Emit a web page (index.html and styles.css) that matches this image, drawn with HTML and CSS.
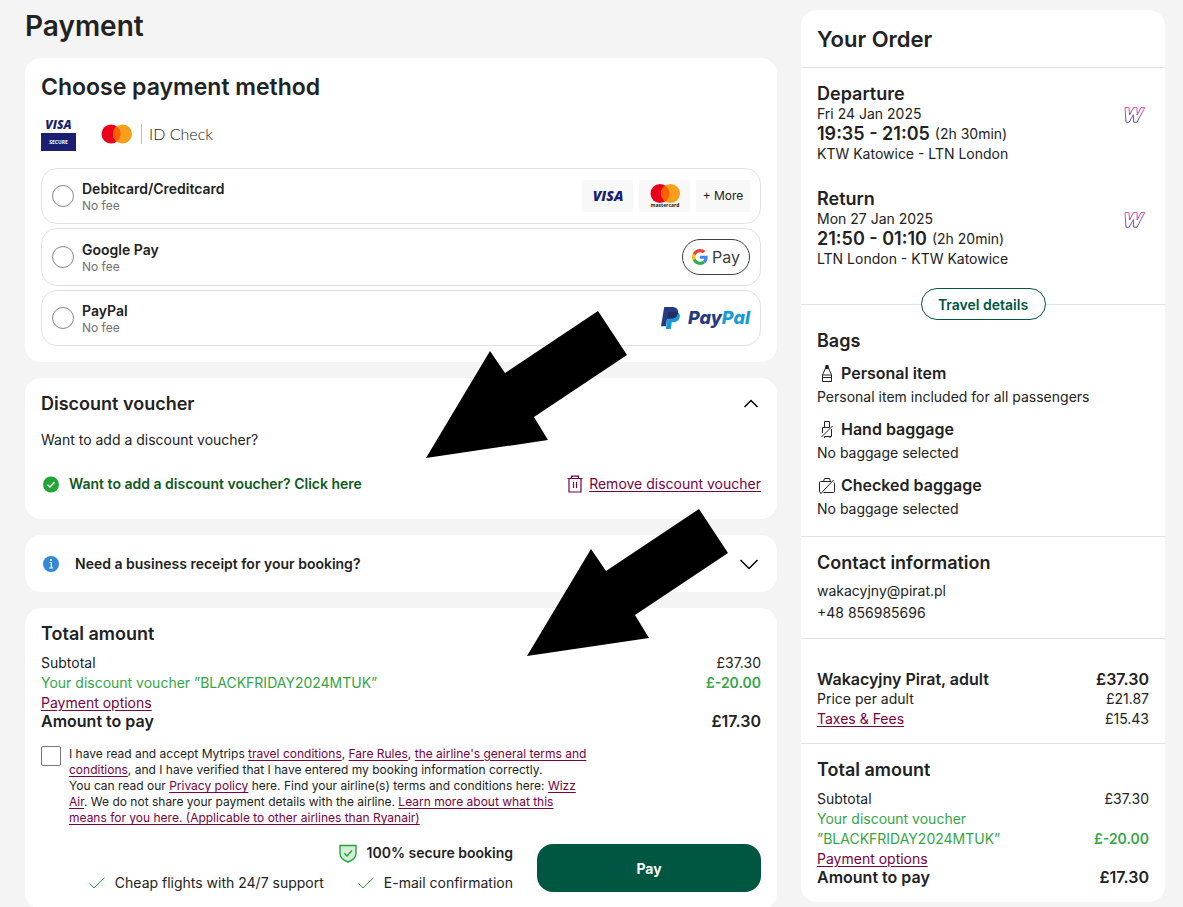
FILE: index.html
```html
<!DOCTYPE html>
<html lang="en">

<head>
    <meta charset="UTF-8">
    <meta name="viewport" content="width=device-width, initial-scale=1.0">
    <title>Payment</title>
    <link rel="stylesheet" href="styles.css">
</head>

<body>
    <div class="page">
        <!-- Left column -->
        <main class="checkout">
            <h1>Payment</h1>

            <!-- Payment methods -->
            <section class="card methods">
                <h2>Choose payment method</h2>
                <div class="secure-logos">
                    <svg class="visa-secure" width="35" height="32" viewBox="0 0 35 32" role="img" aria-label="Visa Secure">
                        <text class="visa-text" x="17.5" y="10" font-size="12" text-anchor="middle">VISA</text>
                        <rect y="14" width="35" height="18" fill="#1a1f71" />
                        <text class="secure-text" x="17.5" y="25" text-anchor="middle">SECURE</text>
                    </svg>
                    <div class="id-check">
                        <svg width="32" height="20" viewBox="0 0 32 20" aria-hidden="true">
                            <circle cx="10" cy="10" r="9.5" fill="#eb001b" />
                            <circle cx="21.5" cy="10" r="9.5" fill="#f79e1b" />
                            <path d="M15.75 2.4a9.5 9.5 0 0 1 0 15.2a9.5 9.5 0 0 1 0-15.2z" fill="#ff5f00" />
                        </svg>
                        <span class="id-check-text">ID Check</span>
                    </div>
                </div>

                <div class="options">
                    <div class="option">
                        <input type="radio" name="method" id="method-card">
                        <label for="method-card"><strong>Debitcard/Creditcard</strong><small>No fee</small></label>
                        <div class="badges">
                            <span class="badge">
                                <svg width="40" height="24" viewBox="0 0 40 24" role="img" aria-label="Visa">
                                    <text class="visa-text" x="20" y="17" font-size="14" text-anchor="middle">VISA</text>
                                </svg>
                            </span>
                            <span class="badge">
                                <svg width="32" height="26" viewBox="0 0 32 26" role="img" aria-label="Mastercard">
                                    <circle cx="11" cy="10.5" r="9.5" fill="#eb001b" />
                                    <circle cx="21.5" cy="10.5" r="9.5" fill="#f79e1b" />
                                    <path d="M16.25 2.6a9.5 9.5 0 0 1 0 15.8a9.5 9.5 0 0 1 0-15.8z" fill="#ff5f00" />
                                    <text class="mastercard-text" x="16" y="24" text-anchor="middle">mastercard</text>
                                </svg>
                            </span>
                            <span class="badge badge-more">+ More</span>
                        </div>
                    </div>

                    <div class="option">
                        <input type="radio" name="method" id="method-google">
                        <label for="method-google"><strong>Google Pay</strong><small>No fee</small></label>
                        <span class="gpay">
                            <svg width="16" height="16" viewBox="0 0 48 48" aria-hidden="true">
                                <path fill="#ea4335" d="M24 9.5c3.54 0 6.71 1.22 9.21 3.6l6.85-6.85C35.9 2.38 30.47 0 24 0 14.62 0 6.51 5.38 2.56 13.22l7.98 6.19C12.43 13.72 17.74 9.5 24 9.5z" />
                                <path fill="#4285f4" d="M46.98 24.55c0-1.57-.15-3.09-.38-4.55H24v9.02h12.94c-.58 2.96-2.26 5.48-4.78 7.18l7.73 6c4.51-4.18 7.09-10.36 7.09-17.65z" />
                                <path fill="#fbbc05" d="M10.53 28.59c-.48-1.45-.76-2.99-.76-4.59s.27-3.14.76-4.59l-7.98-6.19C.92 16.46 0 20.12 0 24c0 3.88.92 7.54 2.56 10.78l7.97-6.19z" />
                                <path fill="#34a853" d="M24 48c6.48 0 11.93-2.13 15.89-5.81l-7.73-6c-2.15 1.45-4.92 2.3-8.16 2.3-6.26 0-11.57-4.22-13.47-9.91l-7.98 6.19C6.51 42.62 14.62 48 24 48z" />
                            </svg>
                            Pay
                        </span>
                    </div>

                    <div class="option">
                        <input type="radio" name="method" id="method-paypal">
                        <label for="method-paypal"><strong>PayPal</strong><small>No fee</small></label>
                        <span class="paypal">
                            <svg width="19" height="22" viewBox="0 0 19 22" aria-hidden="true">
                                <path fill="#179bd7" d="M17.3 5.4C19 7 19.2 9 18.4 11.2C17.5 14 15.2 15.3 12 15.3H10.8L9.7 22H4.8L6.6 10z" />
                                <path fill="#253b80" d="M3.2 0H10.8C15 0 17.7 2 16.9 6C16.2 10 13.5 11.6 9.8 11.6H7.2C6.4 11.6 6 12 5.9 12.8L4.9 19.2H0z" />
                                <path fill="#222d65" d="M8.2 5H15.3Q16.4 5.1 16.9 5.4C16.3 9.8 13.6 11.6 9.8 11.6H7.2Q6.5 11.6 6 12.4L7 6Q7.2 5 8.2 5z" />
                            </svg>
                            <span class="paypal-text">Pay<span>Pal</span></span>
                        </span>
                    </div>
                </div>
            </section>

            <!-- Voucher -->
            <section class="card voucher">
                <div class="card-head">
                    <h3>Discount voucher</h3>
                    <button class="toggle" type="button" aria-label="Hide discount voucher">
                        <svg width="20" height="20" viewBox="0 0 20 20"><path d="M3.5 13L10 6.5L16.5 13" /></svg>
                    </button>
                </div>
                <p>Want to add a discount voucher?</p>
                <div class="voucher-row">
                    <p class="voucher-added">
                        <svg width="20" height="20" viewBox="0 0 20 20" aria-hidden="true">
                            <circle cx="10" cy="10.5" r="8" fill="#23a437" />
                            <path d="M6.5 10.8L9 13L13.5 8.3" fill="none" stroke="#fff" stroke-width="1.4" />
                        </svg>
                        Want to add a discount voucher? Click here
                    </p>
                    <a class="remove" href="#">
                        <svg width="16" height="18" viewBox="0 0 16 18" aria-hidden="true">
                            <path d="M.5 3.5H15.5M2 3.5V17H14V3.5M4.5 3V1.2H11.5V3M6.5 7V13M9.5 7V13" fill="none" stroke="#78013f" stroke-width="1.2" />
                        </svg>
                        <span>Remove discount voucher</span>
                    </a>
                </div>
            </section>

            <!-- Receipt -->
            <section class="card receipt">
                <svg width="20" height="20" viewBox="0 0 20 20" aria-hidden="true">
                    <circle cx="10" cy="10" r="8" fill="#3488d8" />
                    <path d="M8.5 8.5H10.3V14M8.2 14H12" fill="none" stroke="#fff" stroke-width="1.2" />
                    <circle cx="10" cy="6" r="1" fill="#fff" />
                </svg>
                <strong>Need a business receipt for your booking?</strong>
                <button class="toggle" type="button" aria-label="Show business receipt">
                    <svg width="20" height="20" viewBox="0 0 20 20"><path d="M1.5 6L10 14.5L18.5 6" /></svg>
                </button>
            </section>

            <!-- Total -->
            <section class="card total">
                <h3>Total amount</h3>
                <dl class="amounts">
                    <div><dt>Subtotal</dt><dd>£37.30</dd></div>
                    <div class="discount"><dt>Your discount voucher ”BLACKFRIDAY2024MTUK”</dt><dd>£-20.00</dd></div>
                    <div><dt><a href="#">Payment options</a></dt></div>
                    <div class="to-pay"><dt>Amount to pay</dt><dd>£17.30</dd></div>
                </dl>

                <div class="terms">
                    <input type="checkbox" id="accept">
                    <label for="accept">I have read and accept Mytrips <a href="#">travel conditions</a>, <a href="#">Fare Rules</a>, <a href="#">the airline's general terms and conditions</a>, and I have verified that I have entered my booking information correctly.<br>
                        You can read our <a href="#">Privacy policy</a> here. Find your airline(s) terms and conditions here: <a href="#">Wizz Air</a>. We do not share your payment details with the airline. <a href="#">Learn more about what this means for you here. (Applicable to other airlines than Ryanair)</a></label>
                </div>

                <div class="pay-row">
                    <ul class="benefits">
                        <li class="secure">
                            <svg width="18" height="19" viewBox="0 0 18 19" aria-hidden="true">
                                <path d="M1 1.5H17V9.5C17 14 13 16.5 9 18C5 16.5 1 14 1 9.5z" fill="#d3ecd7" stroke="#23a437" stroke-width="1.4" />
                                <path d="M5.2 9.3L8 12L13 6.5" fill="none" stroke="#23a437" stroke-width="1.3" />
                            </svg>
                            100% secure booking
                        </li>
                        <li>
                            <svg width="16" height="12" viewBox="0 0 16 12" aria-hidden="true"><path d="M.5 6.5L5 11L15.5 .8" fill="none" stroke="#23a437" /></svg>
                            Cheap flights with 24/7 support
                        </li>
                        <li>
                            <svg width="16" height="12" viewBox="0 0 16 12" aria-hidden="true"><path d="M.5 6.5L5 11L15.5 .8" fill="none" stroke="#23a437" /></svg>
                            E-mail confirmation
                        </li>
                    </ul>
                    <button class="pay" type="button">Pay</button>
                </div>
            </section>

            <!-- Arrows over the cards -->
            <svg class="arrow arrow-voucher" width="201" height="147" viewBox="0 0 201 147" aria-hidden="true">
                <polygon points="172,0 201,44 108,106 122,129 0,147 64,40 79,62" />
            </svg>
            <svg class="arrow arrow-total" width="201" height="147" viewBox="0 0 201 147" aria-hidden="true">
                <polygon points="172,0 201,44 108,106 122,129 0,147 64,40 79,62" />
            </svg>
        </main>

        <!-- Order summary -->
        <aside class="order">
            <header class="order-head">
                <h2>Your Order</h2>
            </header>

            <section class="flights">
                <div class="flight">
                    <div>
                        <h3>Departure</h3>
                        <p>Fri 24 Jan 2025</p>
                        <p class="times"><strong>19:35 - 21:05</strong> (2h 30min)</p>
                        <p>KTW Katowice - LTN London</p>
                    </div>
                    <svg class="airline" width="22" height="18" viewBox="0 0 22 18" role="img" aria-label="Wizz Air">
                        <defs>
                            <linearGradient id="wizz" x1="0" y1="0" x2="0" y2="1">
                                <stop offset="0" stop-color="#e8549f" />
                                <stop offset="1" stop-color="#5b4bb5" />
                            </linearGradient>
                        </defs>
                        <path d="M1 1.5H5L5.6 9L9.6 1.5H13L13.2 9L17 1.5H20.8L13 16.2H9.7L9.3 8.7L5.2 16.2H2z" fill="none" stroke="url(#wizz)" />
                    </svg>
                </div>
                <div class="flight">
                    <div>
                        <h3>Return</h3>
                        <p>Mon 27 Jan 2025</p>
                        <p class="times"><strong>21:50 - 01:10</strong> (2h 20min)</p>
                        <p>LTN London - KTW Katowice</p>
                    </div>
                    <svg class="airline" width="22" height="18" viewBox="0 0 22 18" role="img" aria-label="Wizz Air">
                        <path d="M1 1.5H5L5.6 9L9.6 1.5H13L13.2 9L17 1.5H20.8L13 16.2H9.7L9.3 8.7L5.2 16.2H2z" fill="none" stroke="url(#wizz)" />
                    </svg>
                </div>
            </section>

            <div class="divider">
                <button class="details" type="button">Travel details</button>
            </div>

            <section class="bags">
                <h3>Bags</h3>
                <div class="bag">
                    <h4>
                        <svg width="20" height="20" viewBox="0 0 20 20" aria-hidden="true">
                            <path d="M9 4L5.5 12V18.5H14.5V12L11 4M6 12H14M5.5 14.5H14.5" />
                            <path class="solid" d="M8.5 2H11.5L12 6H8z" />
                        </svg>
                        Personal item
                    </h4>
                    <p>Personal item included for all passengers</p>
                </div>
                <div class="bag">
                    <h4>
                        <svg width="20" height="20" viewBox="0 0 20 20" aria-hidden="true">
                            <path d="M7.5 8.5V2.5H12.5V8.5M5.5 14V8.5H12.5M14.5 10V17.5H7.5M4.5 18L15.5 7M7.5 17.5V19M13 17.5V19" />
                        </svg>
                        Hand baggage
                    </h4>
                    <p>No baggage selected</p>
                </div>
                <div class="bag">
                    <h4>
                        <svg width="20" height="20" viewBox="0 0 20 20" aria-hidden="true">
                            <path d="M4 17.5H3.5Q2.5 17.5 2.5 16.5V7.5Q2.5 6.5 3.5 6.5H14M17 7.5Q17.5 8 17.5 9V16.5Q17.5 17.5 16.5 17.5H6.5M6.5 6.5L7.5 3.5H12.5L13.5 6.5M3.5 19L16.5 5" />
                        </svg>
                        Checked baggage
                    </h4>
                    <p>No baggage selected</p>
                </div>
            </section>

            <section class="contact">
                <h3>Contact information</h3>
                <p>wakacyjny@pirat.pl</p>
                <p>+48 856985696</p>
            </section>

            <section class="passenger">
                <dl class="amounts">
                    <div class="name"><dt>Wakacyjny Pirat, adult</dt><dd>£37.30</dd></div>
                    <div><dt>Price per adult</dt><dd>£21.87</dd></div>
                    <div><dt><a href="#">Taxes &amp; Fees</a></dt><dd>£15.43</dd></div>
                </dl>
            </section>

            <section class="order-total">
                <h3>Total amount</h3>
                <dl class="amounts">
                    <div><dt>Subtotal</dt><dd>£37.30</dd></div>
                    <div class="discount"><dt>Your discount voucher ”BLACKFRIDAY2024MTUK”</dt><dd>£-20.00</dd></div>
                    <div><dt><a href="#">Payment options</a></dt></div>
                    <div class="to-pay"><dt>Amount to pay</dt><dd>£17.30</dd></div>
                </dl>
            </section>
        </aside>
    </div>
</body>

</html>
```

FILE: styles.css
```css
* {
    margin: 0;
    padding: 0;
    box-sizing: border-box;
}

body {
    background-color: #f4f4f4;
    color: #222;
    font-family: Inter, "Open Sans", sans-serif;
    font-size: 14px;
    line-height: 20px;
}

a {
    color: #78013f;
    text-decoration: underline;
    text-underline-offset: 2px;
}

button {
    font-family: inherit;
    cursor: pointer;
}

svg {
    display: block;
    flex-shrink: 0;
    overflow: visible;
}

h1 {
    font-size: 28px;
    font-weight: 600;
    line-height: 32px;
}

h2 {
    font-size: 22px;
    font-weight: 600;
    line-height: 26px;
}

h3 {
    font-size: 18px;
    font-weight: 600;
    line-height: 20px;
}

h4 {
    display: flex;
    align-items: center;
    gap: 4px;
    font-size: 16px;
    font-weight: 600;
    line-height: 20px;
}

strong {
    font-weight: 600;
}

.page {
    display: grid;
    grid-template-columns: minmax(0, 1fr) 364px;
    align-items: start;
    gap: 24px;
    padding: 10px 18px 0 25px;
}

.checkout {
    position: relative;
    display: flex;
    flex-direction: column;
    gap: 16px;
}

.card {
    padding: 16px;
    background-color: #fff;
    border-radius: 16px;
}

/* Payment methods */
.methods h2 {
    font-size: 23px;
}

.secure-logos {
    display: flex;
    align-items: center;
    gap: 25px;
    margin: 19px 0 17px;
}

.visa-text {
    font-family: "Open Sans", sans-serif;
    font-weight: 800;
    font-style: italic;
    fill: #1a1f71;
}

.secure-text {
    font-family: "Open Sans", sans-serif;
    font-size: 5px;
    font-weight: 700;
    fill: #fff;
}

.mastercard-text {
    font-family: "Open Sans", sans-serif;
    font-size: 5px;
    font-weight: 700;
    fill: #222;
}

.id-check {
    display: flex;
    align-items: center;
    gap: 8px;
    padding-bottom: 3px;
}

.id-check-text {
    padding-left: 7px;
    border-left: 1px solid #bbb;
    font-family: Lato, sans-serif;
    font-size: 16px;
    font-weight: 300;
}

.options {
    display: flex;
    flex-direction: column;
    gap: 4px;
}

.option {
    display: flex;
    align-items: center;
    gap: 8px;
    padding: 10px;
    border: 1px solid #e2e2e2;
    border-radius: 16px;
}

.option input {
    appearance: none;
    width: 22px;
    height: 22px;
    border: 1px solid #888;
    border-radius: 50%;
}

.option label {
    display: flex;
    flex: 1;
    flex-direction: column;
}

.option small {
    color: #717171;
    font-size: 12px;
    line-height: 14px;
}

.badges {
    display: flex;
    gap: 6px;
    height: 32px;
}

.badge {
    display: flex;
    align-items: center;
    justify-content: center;
    width: 51px;
    border-radius: 2px;
    background-color: #f8f8f8;
}

.badge-more {
    width: 54px;
    font-size: 12px;
}

.gpay {
    display: flex;
    align-items: center;
    justify-content: center;
    gap: 4px;
    width: 68px;
    height: 36px;
    border: 1px solid #3c4043;
    border-radius: 18px;
    color: #3c4043;
    font-size: 16px;
}

.paypal {
    display: flex;
    align-items: center;
    gap: 8px;
}

.paypal-text {
    color: #253b80;
    font-size: 18px;
    font-style: italic;
    font-weight: 800;
}

.paypal-text span {
    color: #179bd7;
}

/* Voucher */
.voucher {
    padding-bottom: 25px;
}

.card-head {
    display: flex;
    align-items: center;
    justify-content: space-between;
    margin-bottom: 16px;
}

.toggle {
    border: none;
    background: none;
}

.toggle path {
    fill: none;
    stroke: #000;
    stroke-width: 1.5;
}

.voucher-row {
    display: flex;
    justify-content: space-between;
    margin-top: 24px;
}

.voucher-added {
    display: flex;
    gap: 8px;
    color: #0f5a1c;
    font-weight: 600;
}

.remove {
    display: flex;
    align-items: center;
    gap: 6px;
}

/* Receipt */
.receipt {
    display: flex;
    align-items: center;
    gap: 14px;
    min-height: 57px;
    padding-right: 18px;
}

.receipt .toggle {
    margin-left: auto;
}

/* Price rows */
.amounts {
    margin-top: 9px;
}

.amounts div {
    display: flex;
    align-items: flex-end;
    justify-content: space-between;
}

.amounts .discount {
    color: #35a547;
}

.discount dd {
    font-weight: 600;
}

.amounts .to-pay {
    font-size: 16px;
    font-weight: 600;
    line-height: 16px;
}

/* Terms */
.terms {
    display: flex;
    gap: 8px;
    margin-top: 17px;
    font-size: 12px;
    line-height: 16px;
}

.terms input {
    appearance: none;
    flex-shrink: 0;
    width: 20px;
    height: 20px;
    border: 1px solid #777;
    border-radius: 2px;
}

.terms label {
    max-width: 524px;
}

.pay-row {
    display: flex;
    align-items: center;
    justify-content: flex-end;
    gap: 24px;
    margin-top: 17px;
}

.benefits {
    display: flex;
    flex-wrap: wrap;
    justify-content: flex-end;
    gap: 10px 34px;
    list-style: none;
}

.benefits li {
    display: flex;
    align-items: center;
    gap: 10px;
}

.benefits .secure {
    width: 100%;
    justify-content: flex-end;
    font-weight: 600;
}

.pay {
    flex-shrink: 0;
    width: 224px;
    height: 48px;
    border: none;
    border-radius: 16px;
    background-color: #005741;
    color: #fff;
    font-size: 14px;
    font-weight: 700;
}

/* Arrows */
.arrow {
    position: absolute;
    pointer-events: none;
}

.arrow-voucher {
    top: 301px;
    left: 401px;
}

.arrow-total {
    top: 499px;
    left: 502px;
}

/* Order summary */
.order {
    background-color: #fff;
    border-radius: 16px;
}

.order-head {
    padding: 16px 16px 15px;
    border-bottom: 1px solid #e2e2e2;
}

.flights {
    display: flex;
    flex-direction: column;
    gap: 25px;
    padding: 16px 16px 19px;
}

.flight {
    display: flex;
    justify-content: space-between;
}

.times {
    display: flex;
    align-items: center;
    gap: 5px;
}

.flight strong {
    font-size: 18px;
}

.airline {
    margin: 22px 3px 0 0;
}

.divider {
    display: flex;
    align-items: center;
}

.divider::before,
.divider::after {
    content: "";
    flex: 1;
    border-top: 1px solid #e2e2e2;
}

.details {
    width: 125px;
    height: 32px;
    border: 1px solid #005741;
    border-radius: 16px;
    background-color: #fff;
    color: #005741;
    font-size: 14px;
    font-weight: 600;
}

.bags {
    display: flex;
    flex-direction: column;
    gap: 12px;
    padding: 11px 16px 17px;
}

.bag svg path {
    fill: none;
    stroke: #222;
}

.bag svg .solid {
    fill: #222;
    stroke: none;
}

.bag p {
    margin-top: 4px;
}

.contact {
    padding: 16px 16px 14px;
    border-top: 1px solid #e2e2e2;
    line-height: 22px;
}

.contact h3 {
    margin-bottom: 7px;
}

.passenger {
    padding: 21px 16px 14px;
    border-top: 1px solid #e2e2e2;
}

.passenger .name {
    font-size: 16px;
    font-weight: 600;
}

.order-total {
    padding: 16px 16px 17px;
    border-top: 1px solid #e2e2e2;
}

.order-total dt {
    max-width: 220px;
}
```
